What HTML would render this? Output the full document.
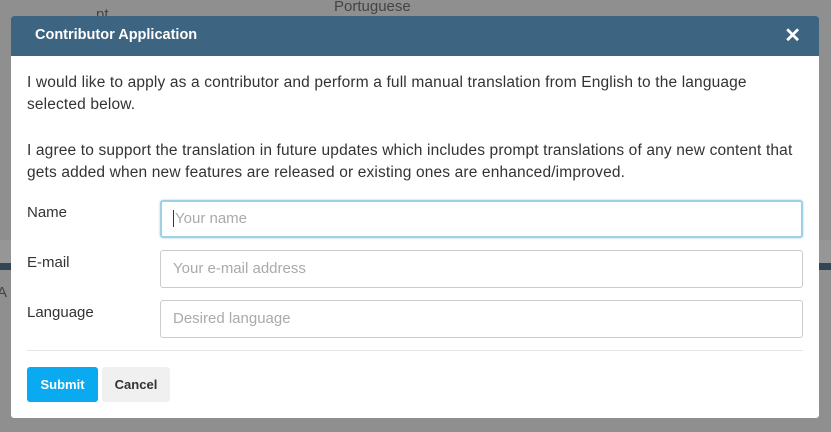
<!DOCTYPE html>
<html><head><style>
*{box-sizing:border-box;margin:0;padding:0}
body{width:831px;height:432px;overflow:hidden;background:#8f8f8f;font-family:"Liberation Sans",sans-serif;position:relative}
.bg{position:absolute;font-size:15px;color:#444}
.modal{position:absolute;left:11px;top:16px;width:808px;height:402px;background:#fff;border-radius:3px;overflow:hidden}
.hdr{height:40px;background:#3d6480;color:#fff;font-weight:bold;font-size:14.5px;padding:11px 0 0 24px;position:relative}
.x{position:absolute;right:18px;top:7px;font-size:20px}
.p{position:absolute;left:16px;font-size:15.5px;color:#333;line-height:22px;width:785px;letter-spacing:0.15px}
.lab{position:absolute;left:16px;font-size:15px;color:#333}
.in{position:absolute;left:149px;width:643px;height:38px;border:1px solid #ccc;border-radius:3px;padding:9px 12px;font-size:15px;color:#aaa}
.focus{border:2px solid #9fd0e6;box-shadow:0 0 2px #9fd0e6;padding:8px 11px}
.hr{position:absolute;left:16px;width:776px;top:334px;border-top:1px solid #e5e5e5}
.btn{position:absolute;top:351px;height:35px;border-radius:3px;font-size:13px;font-weight:bold;padding-top:10px;text-align:center}
</style></head><body>
<div class="bg" style="left:96px;top:6px">pt</div>
<div class="bg" style="left:334px;top:-2px">Portuguese</div>
<div style="position:absolute;left:0;top:263px;width:831px;height:7px;background:#344654"></div>
<div style="position:absolute;left:0;top:240px;width:831px;height:23px;background:#969696"></div>
<div class="bg" style="left:-3px;top:284px">A</div>
<div class="modal">
<div class="hdr">Contributor Application<span class="x">✕</span></div>
<div class="p" style="top:56px">I would like to apply as a contributor and perform a full manual translation from English to the language<br>selected below.</div>
<div class="p" style="top:124px">I agree to support the translation in future updates which includes prompt translations of any new content that<br>gets added when new features are released or existing ones are enhanced/improved.</div>
<div class="lab" style="top:188px">Name</div>
<div class="lab" style="top:238px">E-mail</div>
<div class="lab" style="top:288px">Language</div>
<div class="in focus" style="top:184px"><span style="border-left:1px solid #333;padding-left:1px"></span>Your name</div>
<div class="in" style="top:234px">Your e-mail address</div>
<div class="in" style="top:284px">Desired language</div>
<div class="hr"></div>
<div class="btn" style="left:16px;width:71px;background:#0aaaf0;color:#fff">Submit</div>
<div class="btn" style="left:91px;width:68px;background:#f0f0f0;color:#333">Cancel</div>
</div>
</body></html>
